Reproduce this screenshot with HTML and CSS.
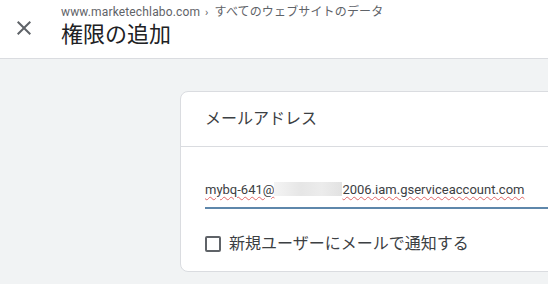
FILE: index.html
```html
<!DOCTYPE html>
<html lang="ja">
<head>
    <title>権限の追加</title>
    <link rel="stylesheet" href="styles.css">
</head>
<body>
    <!-- Top bar -->
    <div class="topbar">
        <button class="close" aria-label="閉じる">
            <svg width="24" height="24" viewBox="0 0 24 24"><path d="M19 6.41L17.59 5 12 10.59 6.41 5 5 6.41 10.59 12 5 17.59 6.41 19 12 13.41 17.59 19 19 17.59 13.41 12z" fill="#5f6368"/></svg>
        </button>
        <div class="titles">
            <div class="crumb">www.marketechlabo.com<span class="chev">›</span>すべてのウェブサイトのデータ</div>
            <h1>権限の追加</h1>
        </div>
    </div>

    <!-- Content -->
    <div class="main">
        <div class="card">
            <div class="card-head">メールアドレス</div>
            <div class="card-body">
                <div class="field">
                    <span class="typo">mybq-641@</span><span class="blur"></span><span class="typo">2006.iam.gserviceaccount.com</span>
                </div>
                <label class="check">
                    <span class="box"></span>
                    新規ユーザーにメールで通知する
                </label>
            </div>
        </div>
    </div>
</body>
</html>
```

FILE: styles.css
```css
body {
    margin: 0;
    background-color: #f1f3f4;
    font-family: Roboto, "Noto Sans CJK JP", sans-serif;
    color: #202124;
    overflow: hidden;
}

/* Header bar */
.topbar {
    display: flex;
    align-items: center;
    height: 58px;
    background-color: #fff;
    border-bottom: 1px solid #dadce0;
}

.close {
    width: 24px;
    height: 24px;
    padding: 0;
    margin: 0 25px 3px 12px;
    border: none;
    background: none;
}

.close svg {
    display: block;
}

.titles {
    margin-top: -6px;
}

.crumb {
    font-size: 12px;
    letter-spacing: 0.15px;
    line-height: 16px;
    color: #5f6368;
}

.chev {
    font-size: 11px;
    margin: 0 6px 0 5px;
}

h1 {
    margin: 0;
    font-size: 22px;
    font-weight: 400;
    line-height: 28px;
    color: #202124;
}

/* Main area with the card */
.main {
    padding: 32px 0 0 180px;
}

.card {
    width: 420px;
    background-color: #fff;
    border: 1px solid #dadce0;
    border-radius: 8px;
}

.card-head {
    height: 54px;
    line-height: 54px;
    padding: 0 24px;
    font-size: 16px;
    color: #3c4043;
    border-bottom: 1px solid #dadce0;
}

.card-body {
    padding: 33px 0 12px 24px;
}

.field {
    font-size: 13px;
    line-height: 20px;
    padding-bottom: 7px;
    border-bottom: 2px solid #5e87ab;
    white-space: nowrap;
    color: #3c4043;
}

.typo {
    text-decoration: underline wavy #e06666;
    text-decoration-thickness: 1px;
    text-underline-offset: 2px;
}

.blur {
    display: inline-block;
    width: 68px;
    height: 14px;
    vertical-align: -2px;
    background: linear-gradient(90deg, #f4f4f4, #e6e6e6 40%, #ececec 70%, #e2e2e2);
}

.check {
    display: flex;
    align-items: center;
    gap: 8px;
    margin-top: 20px;
    font-size: 16px;
    line-height: 30px;
    color: #3c4043;
}

.box {
    width: 12px;
    height: 12px;
    border: 2px solid #5f6368;
    border-radius: 2px;
}
```
